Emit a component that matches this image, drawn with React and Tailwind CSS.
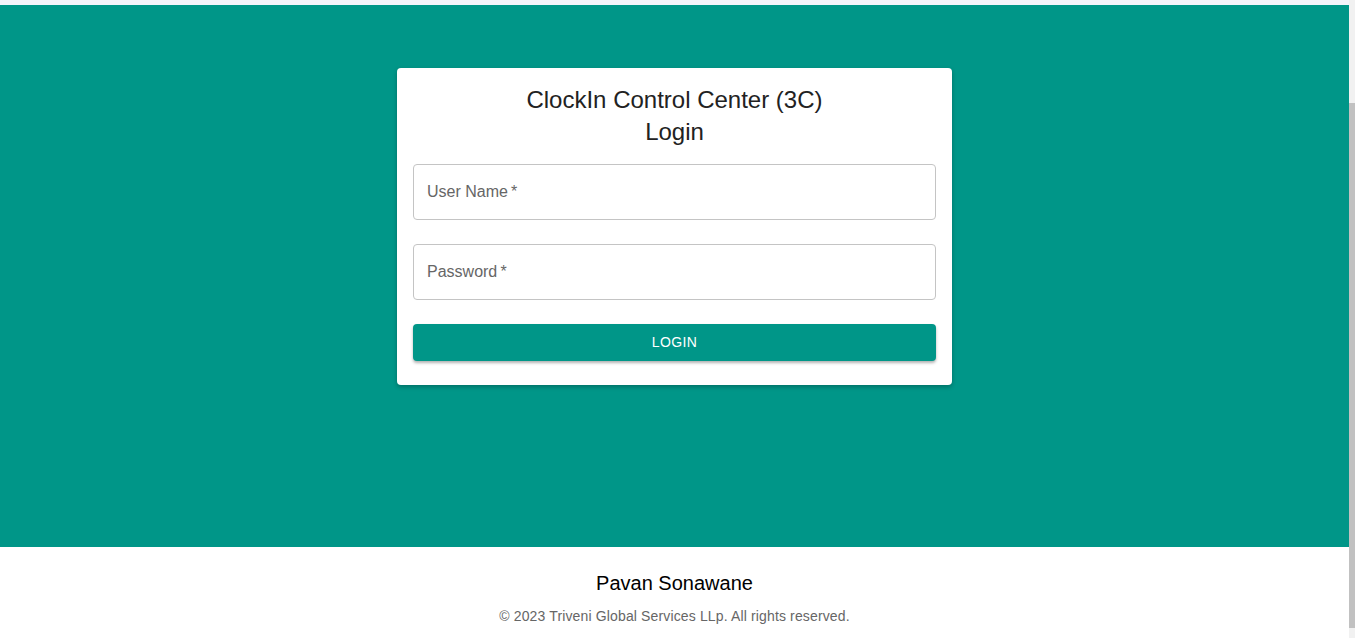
export default function App() {
  return (
    <div className="flex h-[638px] w-full overflow-hidden bg-white font-['Liberation_Sans',Arial,sans-serif]">
      <div className="flex flex-1 flex-col">
        <div className="h-[5px] bg-[#f4f4fa]" />
        <main className="flex h-[542px] justify-center bg-[#009688] pt-[63px]">
          <div className="h-[317px] w-[555px] rounded bg-white px-4 pt-4 shadow-[0_2px_4px_rgba(0,0,0,0.25)]">
            <h1 className="text-center text-[24px] leading-8 text-[#222]">
              ClockIn Control Center (3C)
              <br />
              Login
            </h1>
            <form className="mt-4 flex flex-col gap-6" onSubmit={(e) => e.preventDefault()}>
              <div className="flex h-14 items-center rounded border border-[#c4c4c4] px-[13px]">
                <span className="text-[16px] text-[#666]">User Name&thinsp;*</span>
              </div>
              <div className="flex h-14 items-center rounded border border-[#c4c4c4] px-[13px]">
                <span className="text-[16px] text-[#666]">Password&thinsp;*</span>
              </div>
              <button
                type="submit"
                className="h-[37px] rounded bg-[#009688] text-[14px] font-medium tracking-[0.4px] text-white shadow-[0_2px_3px_rgba(0,0,0,0.3)]"
              >
                LOGIN
              </button>
            </form>
          </div>
        </main>
        <footer className="flex flex-1 flex-col items-center pt-[24px]">
          <p className="text-[20px] leading-6 text-black">Pavan Sonawane</p>
          <p className="mt-[11px] text-[14px] tracking-[0.14px] text-[#666]">
            © 2023 Triveni Global Services LLp. All rights reserved.
          </p>
        </footer>
      </div>
      <div className="flex w-[6px] flex-col bg-[#f1f1f1]">
        <div className="mt-[103px] h-[525px] bg-[#c1c1c1]" />
      </div>
    </div>
  );
}
